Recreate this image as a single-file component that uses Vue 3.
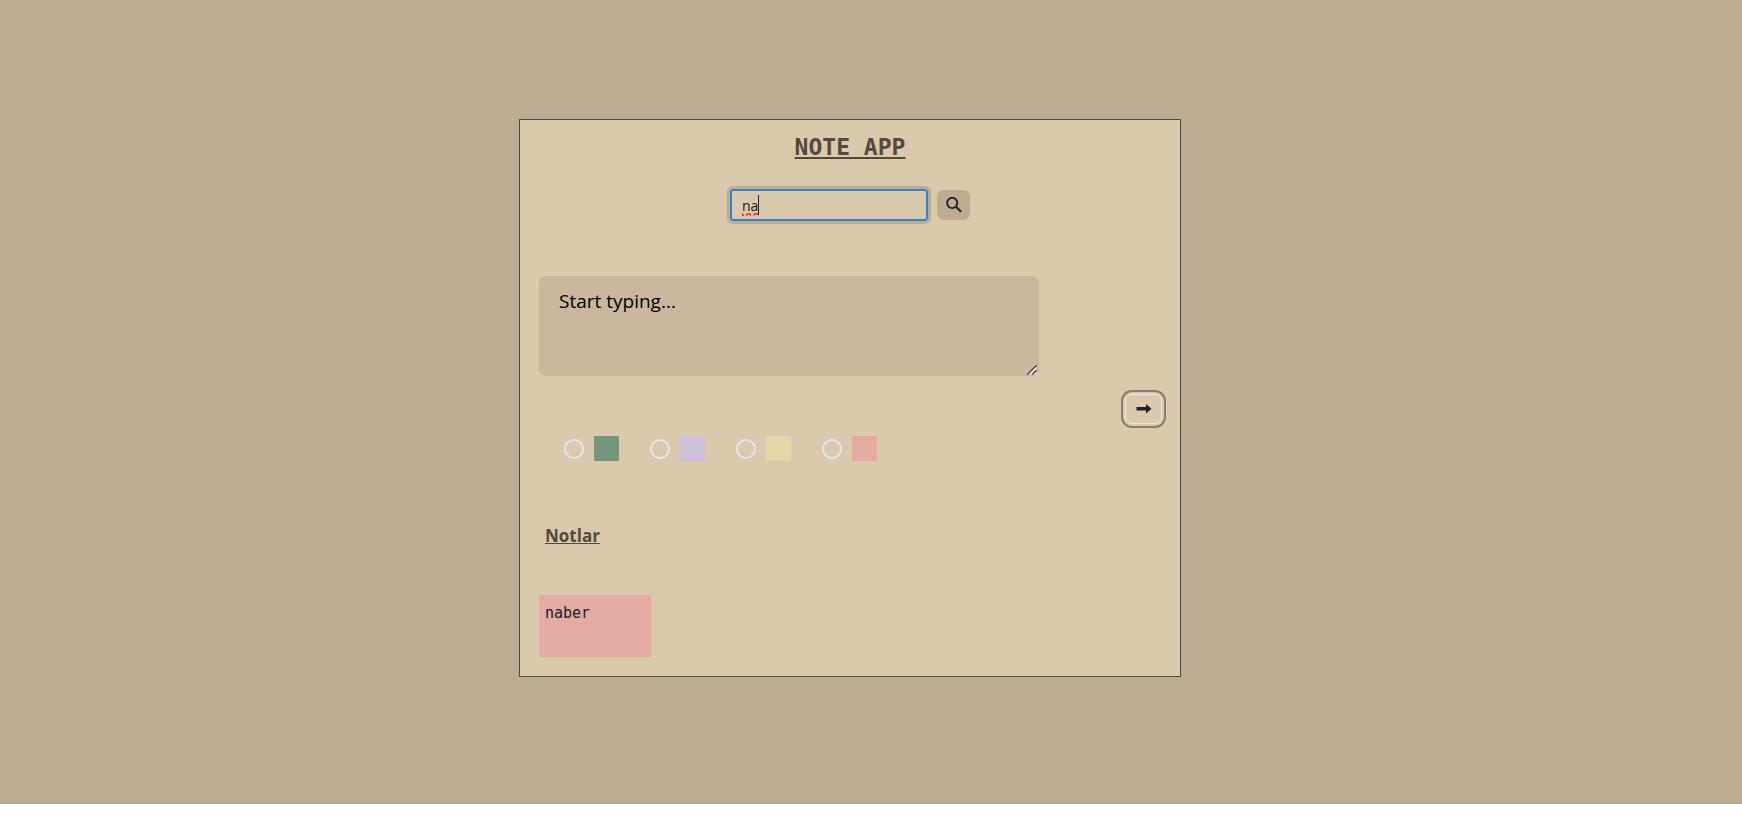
<script setup>
import { ref } from 'vue'

const query = ref('na')
const draft = ref('')
const color = ref('')
const colors = ['green', 'lilac', 'yellow', 'pink']
const notes = ref([{ id: 1, text: 'naber', color: 'pink' }])

function addNote() {
  if (!draft.value.trim() || !color.value) return
  notes.value.push({ id: notes.value.length + 1, text: draft.value, color: color.value })
  draft.value = ''
}
</script>

<template>
  <div class="page">
    <main class="card">
      <h1 class="title">NOTE APP</h1>

      <form class="search" @submit.prevent>
        <div class="search-field">
          <input v-model="query" class="search-input" type="text" aria-label="Search" spellcheck="false" />
          <svg class="squiggle" viewBox="0 0 16 3" width="16" height="3" aria-hidden="true">
            <path d="M0 .5 1 2.3 2 2.300M4 2.300 6 .7 7 .7 9 2.300M11.500 2.300 13 .7 14.500 .7 16 2.300" fill="none" stroke="#fa2a2a" stroke-width="1.600" />
          </svg>
          <span class="caret"></span>
        </div>
        <button class="search-button" type="submit" aria-label="Search notes">
          <svg viewBox="0 0 16 16" width="16" height="16" aria-hidden="true">
            <circle cx="6.200" cy="6" r="5.100" fill="none" stroke="#1a202c" stroke-width="1.900" />
            <path d="M10 9.800 14.500 14.300" stroke="#1a202c" stroke-width="2" stroke-linecap="round" />
          </svg>
        </button>
      </form>

      <div class="draft">
        <textarea v-model="draft" class="draft-input" aria-label="Note" placeholder="Start typing..."></textarea>
        <svg class="grip" viewBox="0 0 10 10" width="10" height="10" aria-hidden="true">
          <path d="M.5 9.500 9.500 .5M5.500 9.500 9.500 5.500" stroke="#443e36" stroke-width="1.500" />
          <path d="M2.500 9.500 9.500 2.500M7.500 9.500 9.500 7.500" stroke="#f3ede4" stroke-width="1.500" />
        </svg>
      </div>

      <div class="actions">
        <button class="add-button" type="button" aria-label="Add note" @click="addNote">
          <svg viewBox="0 0 16 10" width="16" height="10" aria-hidden="true">
            <path d="M.5 3h9.500V0l5.500 4.800L10 9.600V6.600H.5z" fill="#1a202c" />
          </svg>
        </button>
      </div>

      <div class="colors" role="radiogroup" aria-label="Note color">
        <label v-for="c in colors" :key="c" class="color">
          <input v-model="color" class="radio" type="radio" name="color" :value="c" :aria-label="c" />
          <span class="swatch" :class="c"></span>
        </label>
      </div>

      <h2 class="subtitle">Notlar</h2>

      <div class="notes">
        <article v-for="note in notes" :key="note.id" class="note" :class="note.color">{{ note.text }}</article>
      </div>
    </main>
  </div>
</template>

<style>
body {
  margin: 0;
  background: #fff;
}
</style>

<style scoped>
* {
  box-sizing: border-box;
}
.page {
  display: flex;
  justify-content: center;
  padding: 119px 42px 127px 0;
  background: #bdac92;
  color: #1a202c;
  font-family: "Open Sans", "Noto Sans", sans-serif;
}
.card {
  width: 662px;
  max-width: 100%;
  padding: 11px 19px 19px;
  border: 1px solid #524a3d;
  background: #dac9ac;
}
.title {
  margin: 0;
  color: #524a3d;
  font: bold 23px/32px "DejaVu Sans Mono", monospace;
  text-align: center;
  text-decoration: underline;
  text-decoration-thickness: 2px;
  text-underline-offset: 2px;
}
.search {
  display: flex;
  justify-content: center;
  align-items: center;
  gap: 9px;
  margin-top: 26px;
}
.search-field {
  position: relative;
  width: 198px;
}
.search-input {
  display: block;
  width: 100%;
  height: 32px;
  padding: 0 10px;
  border: 2px solid #3182ce;
  border-radius: 3px;
  outline: 3px solid #bdac92;
  background: transparent;
  color: #1a202c;
  font: 14px/20px "Open Sans", sans-serif;
}
.squiggle {
  position: absolute;
  left: 12px;
  top: 24px;
}
.caret {
  position: absolute;
  left: 28px;
  top: 6px;
  width: 1px;
  height: 20px;
  background: #1a202c;
}
.search-button {
  display: flex;
  justify-content: center;
  align-items: center;
  width: 33px;
  height: 30px;
  padding: 0;
  border: 0;
  border-radius: 7px;
  background: #bdac92;
}
.draft {
  position: relative;
  width: 500px;
  max-width: 100%;
  margin-top: 55px;
}
.draft-input {
  display: block;
  width: 100%;
  height: 100px;
  padding: 10px 20px;
  border: 0;
  border-radius: 7px;
  background: #cab79d;
  color: #000;
  font: 19px/30px "Open Sans", sans-serif;
  resize: none;
}
.draft-input::placeholder {
  color: #000;
  opacity: 1;
}
.grip {
  position: absolute;
  right: 2px;
  bottom: 1px;
}
.actions {
  display: flex;
  justify-content: flex-end;
  margin-top: 18px;
}
.add-button {
  display: flex;
  justify-content: center;
  align-items: center;
  width: 37px;
  height: 30px;
  padding: 0;
  border: 1px solid #e2e8f0;
  border-radius: 7px;
  outline: 2px solid #8d7d68;
  outline-offset: 2px;
  background: transparent;
  margin-right: -1px;
}
.colors {
  display: flex;
  gap: 31px;
  margin: 12px 0 0 25px;
}
.color {
  display: flex;
  align-items: center;
  gap: 10px;
}
.radio {
  appearance: none;
  width: 20px;
  height: 20px;
  margin: 0;
  border: 2px solid #e2e8f0;
  border-radius: 50%;
}
.radio:checked {
  background: #3182ce;
}
.swatch {
  width: 25px;
  height: 25px;
}
.green {
  background: #73967c;
}
.lilac {
  background: #d1c0d9;
}
.yellow {
  background: #e5d5a9;
}
.pink {
  background: #e3aba2;
}
.subtitle {
  margin: 61px 6px 0;
  color: #524a3d;
  font: bold 17px/28px "Open Sans", sans-serif;
  text-decoration: underline;
  text-decoration-thickness: 1px;
  text-underline-offset: 1px;
}
.notes {
  display: flex;
  flex-wrap: wrap;
  gap: 20px;
  margin-top: 45px;
}
.note {
  width: 112px;
  min-height: 62px;
  padding: 6px;
  font: 15px/24px "DejaVu Sans Mono", monospace;
}
</style>
